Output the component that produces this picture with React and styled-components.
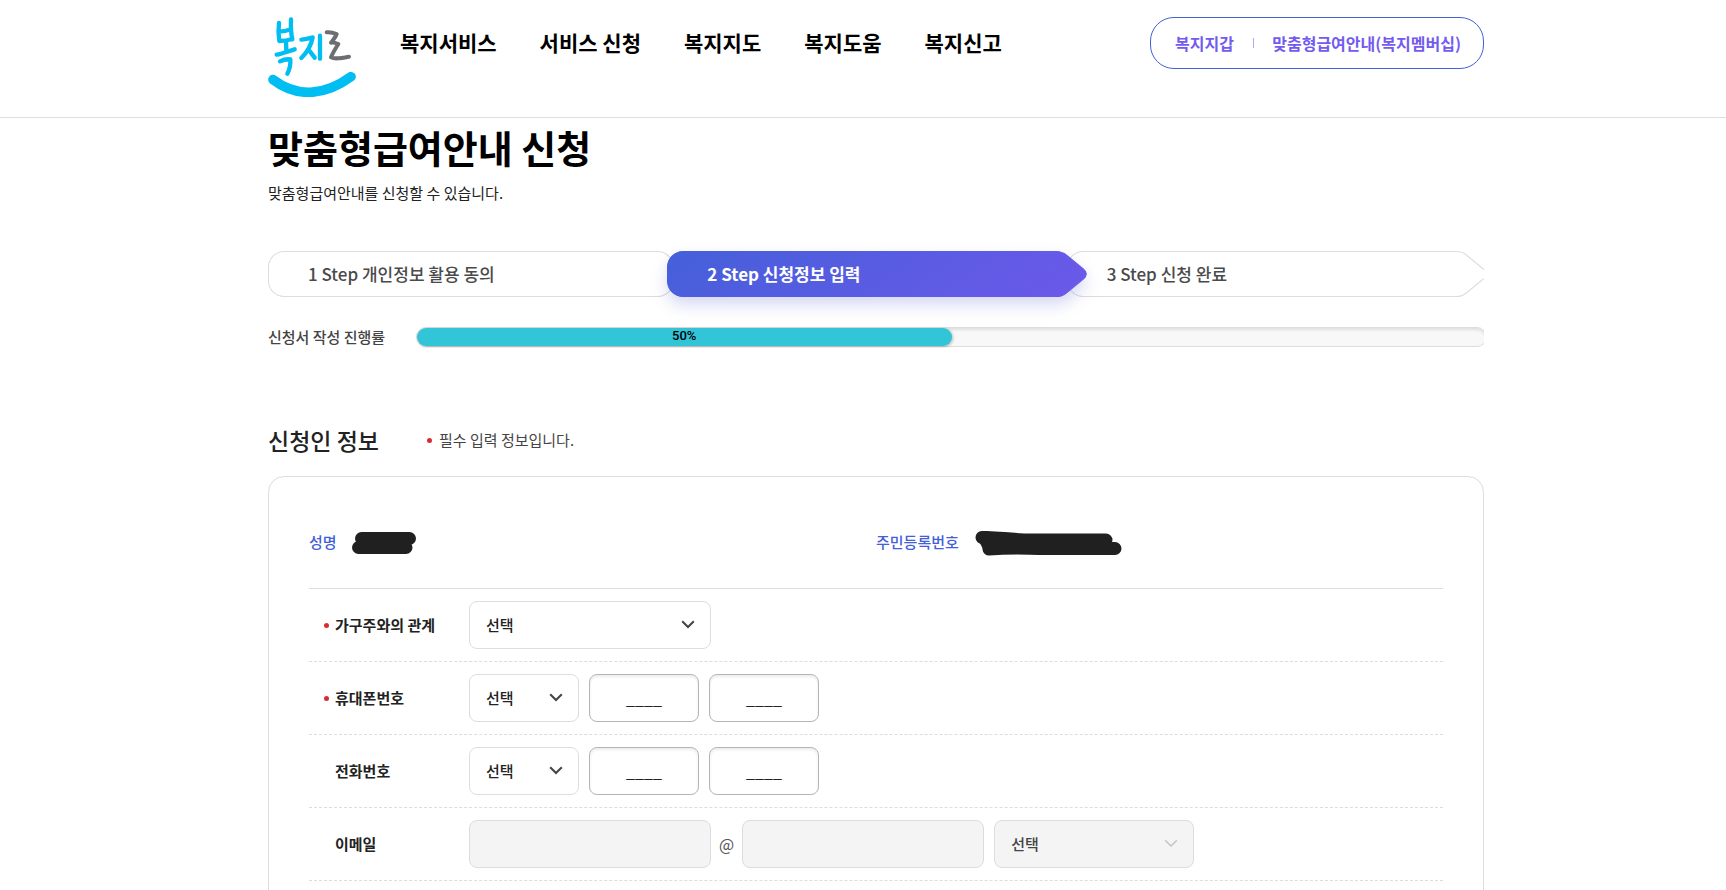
import React from "react";
import styled, { createGlobalStyle, css } from "styled-components";

const GlobalStyle = createGlobalStyle`
  *, *::before, *::after { box-sizing: border-box; }
  body {
    margin: 0;
    background: #fff;
    color: #222;
    font-family: "Noto Sans CJK KR", "Noto Sans", sans-serif;
    font-size: 15px;
    line-height: 22px;
    overflow-x: hidden;
  }
  h1, h2, p, ul, ol, dl, dd { margin: 0; padding: 0; }
  ul, ol { list-style: none; }
  a { color: inherit; text-decoration: none; }
  input, select, button { font: inherit; color: inherit; margin: 0; }
`;

const Container = styled.div`
  max-width: 1242px;
  margin: 0 auto;
  padding-left: 26px;
`;

const Header = styled.header`
  border-bottom: 1px solid #ddd;
`;

const HeaderInner = styled(Container)`
  display: flex;
  align-items: flex-start;
  padding-top: 17px;
  padding-bottom: 20px;
`;

const LogoLink = styled.a`
  display: block;
  width: 88px;
  height: 80px;
  margin-right: 44px;
  svg { display: block; }
`;

const NavList = styled.ul`
  display: flex;
  gap: 43px;
  font-size: 21px;
  line-height: 50px;
  font-weight: 700;
  color: #000;
  white-space: nowrap;
`;

const Pill = styled.div`
  display: flex;
  align-items: center;
  justify-content: space-between;
  width: 334px;
  height: 52px;
  margin-left: auto;
  padding: 0 22px 0 24px;
  border: 1px solid #4260d8;
  border-radius: 24px;
  color: #735bf0;
  font-size: 16px;
  font-weight: 700;
  white-space: nowrap;
`;

const PillDivider = styled.span`
  width: 1px;
  height: 10px;
  background: #b3a6f6;
`;

const PageTitle = styled.h1`
  font-size: 38px;
  line-height: 58px;
  font-weight: 700;
  color: #000;
`;

const Lead = styled.p`
  padding-top: 6px;
`;

const Steps = styled.ol`
  display: grid;
  grid-template-columns: repeat(3, 1fr);
  padding: 47px 18px 29px 0;
  overflow-x: clip;
`;

const StepItem = styled.li`
  display: grid;
  align-items: center;
  position: relative;
  z-index: ${(p) => (p.$active ? 1 : 0)};
  color: ${(p) => (p.$active ? "#fff" : "#4a4a4a")};
  font-size: 17px;
  font-weight: ${(p) => (p.$active ? 700 : 500)};
  > * { grid-area: 1 / 1; }
`;

const StepShape = styled.svg`
  display: block;
  width: calc(100% + 20px);
  height: 46px;
  overflow: visible;
  ${(p) => p.$active && css`filter: drop-shadow(0 8px 8px rgba(70, 80, 200, 0.22));`}
`;

const StepText = styled.span`
  position: relative;
  padding-left: 40px;
  white-space: nowrap;
`;

const ProgressRow = styled.div`
  display: flex;
  align-items: center;
  overflow: hidden;
  color: #444;
`;

const ProgressLabel = styled.span`
  flex: 0 0 148px;
  font-weight: 500;
`;

const Track = styled.div`
  flex: 1 0 auto;
  height: 20px;
  margin-right: -3px;
  border: 1px solid #ddd;
  border-radius: 10px;
  background: #f8f8f8;
  box-shadow: inset 0 2px 3px rgba(0, 0, 0, 0.1);
`;

const Fill = styled.div`
  height: 18px;
  border-radius: 9px;
  background: #32c5d8;
  box-shadow: 1px 1px 3px rgba(0, 0, 0, 0.25);
  color: #000;
  font: 500 13px/16px Roboto, sans-serif;
  text-align: center;
`;

const SectionHead = styled.div`
  display: flex;
  align-items: center;
  gap: 48px;
  padding: 75px 0 19px;
`;

const SectionTitle = styled.h2`
  font-size: 23px;
  line-height: 34px;
  font-weight: 500;
`;

const Dot = styled.span`
  display: inline-block;
  width: 5px;
  height: 5px;
  border-radius: 50%;
  background: #dc2a34;
`;

const RequiredNote = styled.p`
  display: flex;
  align-items: center;
  gap: 7px;
  color: #444;
`;

const Card = styled.form`
  padding: 40px 40px 60px;
  border: 1px solid #ddd;
  border-radius: 16px;
`;

const Identity = styled.dl`
  display: grid;
  grid-template-columns: 1fr 1fr;
  height: 72px;
  padding-top: 14px;
  border-bottom: 1px solid #ddd;
`;

const IdentityItem = styled.div`
  display: flex;
  align-items: flex-start;
  gap: 15px;
  dt { color: #4260d8; font-weight: 500; }
  svg { display: block; }
`;

const Row = styled.div`
  display: flex;
  align-items: center;
  padding: 12px 0;
  border-bottom: 1px dashed #ddd;
`;

const RowLabel = styled.label`
  display: flex;
  align-items: center;
  gap: 6px;
  flex: 0 0 160px;
  padding-left: ${(p) => (p.$required ? 15 : 26)}px;
  font-weight: 700;
`;

const Fields = styled.div`
  display: flex;
  align-items: center;
  gap: 10px;
`;

const At = styled.span`
  margin: 0 -2px;
  color: #555;
  font-size: 16px;
`;

const controlBox = css`
  display: block;
  width: ${(p) => p.$w}px;
  height: 48px;
  border: 1px solid #ddd;
  border-radius: 8px;
  background: #fff;
  outline: none;
  &:disabled { background: #f4f4f4; opacity: 1; }
`;

const TextInput = styled.input`
  ${controlBox}
  padding: 0 12px;
  font-size: 16px;
  text-align: center;
  &:enabled {
    border-color: #b5b5b5;
    box-shadow: inset 0 2px 3px rgba(0, 0, 0, 0.08);
  }
`;

const SelectWrap = styled.span`
  display: block;
  position: relative;
  svg {
    position: absolute;
    right: 16px;
    top: 16px;
    pointer-events: none;
    color: ${(p) => (p.$muted ? "#c4c4c4" : "#444")};
  }
`;

const SelectBox = styled.select`
  ${controlBox}
  appearance: none;
  padding: 0 36px 0 16px;
  font-weight: 500;
  color: #222;
  &:disabled { color: #444; }
`;

function Select({ id, label, width, disabled }) {
  return (
    <SelectWrap $muted={disabled}>
      <SelectBox id={id} aria-label={label} $w={width} disabled={disabled}>
        <option>선택</option>
      </SelectBox>
      <svg width="14" height="14" viewBox="0 0 14 14" fill="none" stroke="currentColor" strokeWidth={disabled ? 1.5 : 2} aria-hidden="true">
        <path d="M1.2 4.2 7 10l5.800-5.800" />
      </svg>
    </SelectWrap>
  );
}

function Logo() {
  return (
    <svg width="88" height="80" viewBox="54 51 264 240" fill="none" stroke="#00bdf2" strokeLinecap="round" strokeLinejoin="round" aria-hidden="true">
      <g strokeWidth="13">
        <path d="M87 69C85 85 85 105 88 123M123 58C122 78 123 100 127 118M88 95C100 95 112 92 123 88M88 123C102 123 115 121 127 117" />
        <path d="M108 124 109 152M80 164C98 161 115 153 134 148M90 184C102 178 112 177 121 178C122 192 119 208 112 221" />
        <path d="M154 119C166 118 176 115 188 112C184 134 172 156 154 174M175 148C182 157 188 165 194 173M210 107V176" />
      </g>
      <g stroke="#6d6e72" strokeWidth="12">
        <path d="M230 97C240 96 250 98 260 102C257 111 250 119 243 128C250 127 258 129 265 132C258 143 249 157 243 172C254 178 270 175 297 170" />
      </g>
      <path strokeWidth="29" d="M69 239C138 292 222 290 303 230" />
    </svg>
  );
}

function Step({ active, children }) {
  return (
    <StepItem $active={active} aria-current={active ? "step" : undefined}>
      <StepShape $active={active} viewBox="0 0 419 46" preserveAspectRatio="none" aria-hidden="true">
        <defs>
          <linearGradient id="stepFill" x1="120" y1="-110" x2="300" y2="156" gradientUnits="userSpaceOnUse">
            <stop offset="0" stopColor="#4160d8" />
            <stop offset="1" stopColor="#7058ec" />
          </linearGradient>
        </defs>
        <path
          d="M16 .5H389Q395 .5 399 4L416 18Q422 23 416 28L399 42Q395 45.500 389 45.500H16A15.500 15.500 0 0 1 .5 30V16A15.500 15.500 0 0 1 16 .5Z"
          fill={active ? "url(#stepFill)" : "#fff"}
          stroke={active ? "url(#stepFill)" : "#ddd"}
        />
      </StepShape>
      <StepText>{children}</StepText>
    </StepItem>
  );
}

function PhoneRow({ id, label, required }) {
  return (
    <Row>
      <RowLabel htmlFor={id} $required={required}>
        {required && <Dot />}
        {label}
      </RowLabel>
      <Fields>
        <Select id={id} width={110} />
        <TextInput $w={110} defaultValue="____" aria-label={`${label} 가운데 자리`} />
        <TextInput $w={110} defaultValue="____" aria-label={`${label} 끝자리`} />
      </Fields>
    </Row>
  );
}

const MENU = ["복지서비스", "서비스 신청", "복지지도", "복지도움", "복지신고"];
const PROGRESS = 50;

export default function App() {
  return (
    <>
      <GlobalStyle />
      <Header>
        <HeaderInner>
          <LogoLink href="#" aria-label="복지로">
            <Logo />
          </LogoLink>
          <nav>
            <NavList>
              {MENU.map((item) => (
                <li key={item}>
                  <a href="#">{item}</a>
                </li>
              ))}
            </NavList>
          </nav>
          <Pill>
            <a href="#">복지지갑</a>
            <PillDivider />
            <a href="#">맞춤형급여안내(복지멤버십)</a>
          </Pill>
        </HeaderInner>
      </Header>

      <Container as="main">
        <PageTitle>맞춤형급여안내 신청</PageTitle>
        <Lead>맞춤형급여안내를 신청할 수 있습니다.</Lead>

        <Steps>
          <Step>1 Step 개인정보 활용 동의</Step>
          <Step active>2 Step 신청정보 입력</Step>
          <Step>3 Step 신청 완료</Step>
        </Steps>

        <ProgressRow>
          <ProgressLabel id="progress-label">신청서 작성 진행률</ProgressLabel>
          <Track role="progressbar" aria-labelledby="progress-label" aria-valuenow={PROGRESS} aria-valuemin={0} aria-valuemax={100}>
            <Fill style={{ width: `${PROGRESS}%` }}>{PROGRESS}%</Fill>
          </Track>
        </ProgressRow>

        <SectionHead>
          <SectionTitle>신청인 정보</SectionTitle>
          <RequiredNote>
            <Dot />
            필수 입력 정보입니다.
          </RequiredNote>
        </SectionHead>

        <Card>
          <Identity>
            <IdentityItem>
              <dt>성명</dt>
              <dd>
                <svg width="65" height="24" viewBox="0 0 65 24" fill="none" stroke="#202020" strokeLinecap="round" aria-hidden="true">
                  <path strokeWidth="13" d="M9.500 7.500H57.500M6.500 16.500H54" />
                </svg>
              </dd>
            </IdentityItem>
            <IdentityItem>
              <dt>주민등록번호</dt>
              <dd>
                <svg width="149" height="25" viewBox="0 0 149 25" fill="none" stroke="#202020" strokeLinecap="round" strokeLinejoin="round" aria-hidden="true">
                  <path strokeWidth="13" d="M8 6.500C22 6 37 9 57 9H132M15 18C42 16 52 17.500 72 17.500H141" />
                  <path strokeWidth="10" d="M10 9 14 17" />
                </svg>
              </dd>
            </IdentityItem>
          </Identity>

          <Row>
            <RowLabel htmlFor="relation" $required>
              <Dot />
              가구주와의 관계
            </RowLabel>
            <Fields>
              <Select id="relation" width={242} />
            </Fields>
          </Row>
          <PhoneRow id="mobile" label="휴대폰번호" required />
          <PhoneRow id="phone" label="전화번호" />
          <Row>
            <RowLabel htmlFor="email">이메일</RowLabel>
            <Fields>
              <TextInput id="email" $w={242} disabled />
              <At>@</At>
              <TextInput $w={242} disabled aria-label="이메일 도메인" />
              <Select label="이메일 도메인 선택" width={200} disabled />
            </Fields>
          </Row>
        </Card>
      </Container>
    </>
  );
}
